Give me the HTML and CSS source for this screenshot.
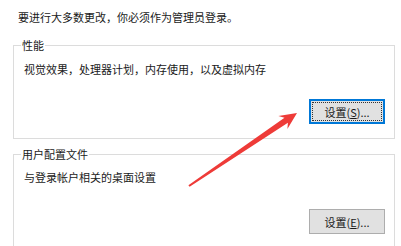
FILE: index.html
```html
<!DOCTYPE html>
<html lang="zh-CN">
<head>
<meta charset="utf-8">
<link rel="stylesheet" href="styles.css">
</head>
<body>
<div class="page">
  <p class="intro">要进行大多数更改，你必须作为管理员登录。</p>
  <fieldset class="group">
    <legend class="group-title">性能</legend>
    <p class="desc">视觉效果，处理器计划，内存使用，以及虚拟内存</p>
    <div class="actions">
      <button class="btn btn-focus" type="button">设置(<u>S</u>)...</button>
    </div>
  </fieldset>
  <fieldset class="group group-last">
    <legend class="group-title">用户配置文件</legend>
    <p class="desc">与登录帐户相关的桌面设置</p>
    <div class="actions">
      <button class="btn" type="button">设置(<u>E</u>)...</button>
    </div>
  </fieldset>
</div>
<svg class="arrow" width="401" height="246" viewBox="0 0 401 246">
  <polygon fill="#ee3b38" points="188.4,185.2 284.5,117.8 278.4,115.9 297,113 287.4,129.1 287.9,122.8 189.6,186.8"/>
</svg>
</body>
</html>
```
FILE: styles.css
```css
html, body {
  margin: 0;
  padding: 0;
  background: #ffffff;
}
body {
  width: 401px;
  height: 246px;
  overflow: hidden;
  position: relative;
  font-family: "Noto Sans CJK SC", "Noto Sans", sans-serif;
  font-size: 11px;
  line-height: 14px;
  color: #1a1a1a;
}
.page {
  padding: 10px 6px 0 13px;
}
.intro {
  margin: 0 0 14px 5px;
}
.group {
  margin: 0;
  border: 1px solid #dcdcdc;
  padding: 0 9px 14px 7px;
  min-width: 0;
}
.group-last {
  margin-top: 8px;
  padding-bottom: 40px;
}
.group-title {
  padding: 0 1px;
}
.desc {
  margin: 10px 0 0 3px;
}
.actions {
  display: flex;
  justify-content: flex-end;
  margin-top: 23px;
}
.group-last .desc {
  margin-top: 9px;
}
.group-last .actions {
  margin-top: 25px;
}
.btn {
  position: relative;
  width: 76px;
  height: 25px;
  margin: 0;
  padding: 0;
  font-family: inherit;
  font-size: 11px;
  line-height: 14px;
  color: #1a1a1a;
  background: #e1e1e1;
  border: 1px solid #adadad;
  border-radius: 0;
}
.btn u {
  text-decoration: underline;
  text-underline-offset: 1px;
}
.btn-focus {
  border: 2px solid #0078d7;
}
.btn-focus::after {
  content: "";
  position: absolute;
  inset: 1px;
  border: 1px dotted #333;
}
.arrow {
  position: absolute;
  left: 0;
  top: 0;
  pointer-events: none;
}
```
